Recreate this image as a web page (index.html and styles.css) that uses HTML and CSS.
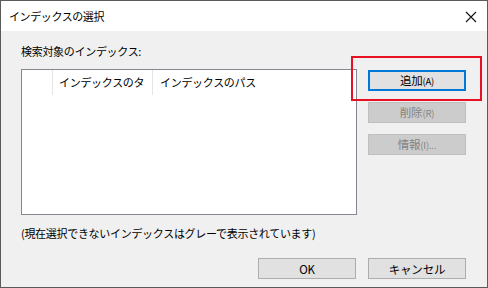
FILE: index.html
```html
<!DOCTYPE html>
<html lang="ja">
<head>
    <meta charset="UTF-8">
    <title>インデックスの選択</title>
    <link rel="stylesheet" href="styles.css">
</head>
<body>
    <div class="dialog">
        <div class="titlebar">
            <span class="title">インデックスの選択</span>
            <svg class="close" width="12" height="12" viewBox="0 0 12 12">
                <path d="M1 1 L11 11 M11 1 L1 11" stroke="#111" stroke-width="1.1" fill="none"/>
            </svg>
        </div>

        <div class="content">
            <div class="label">検索対象のインデックス:</div>

            <div class="main-row">
                <div class="listbox">
                    <div class="list-header">
                        <div class="col col-check"></div>
                        <div class="col col-name">インデックスのタ</div>
                        <div class="col col-path">インデックスのパス</div>
                    </div>
                </div>

                <div class="side-buttons">
                    <button class="btn btn-default">追加<span class="key">(A)</span></button>
                    <button class="btn" disabled>削除<span class="key">(R)</span></button>
                    <button class="btn" disabled>情報<span class="key">(I)...</span></button>
                    <div class="highlight"></div>
                </div>
            </div>

            <div class="note">(現在選択できないインデックスはグレーで表示されています)</div>

            <div class="footer">
                <button class="btn">OK</button>
                <button class="btn">キャンセル</button>
            </div>
        </div>
    </div>
</body>
</html>
```

FILE: styles.css
```css
body {
    margin: 0;
    padding: 0;
    font-family: "Noto Sans CJK JP", "Noto Sans", sans-serif;
    font-size: 11px;
    letter-spacing: -0.3px;
    color: #000;
    background: #fff;
}

.dialog {
    width: 488px;
    height: 288px;
    box-sizing: border-box;
    border: 1px solid #5a5a5a;
    display: flex;
    flex-direction: column;
}

.titlebar {
    height: 30px;
    background: #fff;
    display: flex;
    align-items: center;
    justify-content: space-between;
    padding: 0 10px 0 8px;
    flex-shrink: 0;
}

.title {
    letter-spacing: -0.4px;
}

.close {
    margin-top: 1px;
}

.content {
    flex: 1;
    background: #f0f0f0;
    padding: 12px 0 0 20px;
    display: flex;
    flex-direction: column;
}

.label {
    line-height: 16px;
}

.main-row {
    display: flex;
    margin-top: 10px;
}

.listbox {
    width: 336px;
    height: 146px;
    box-sizing: border-box;
    border: 1px solid #828790;
    background: #fff;
}

.list-header {
    display: flex;
    height: 25px;
}

.col {
    line-height: 25px;
    padding-left: 6px;
    box-sizing: border-box;
    border-right: 1px solid #e5e5e5;
    white-space: nowrap;
    overflow: hidden;
}

.col-check {
    width: 31px;
}

.col-name {
    width: 100px;
}

.col-path {
    border-right: none;
    padding-left: 7px;
}

.side-buttons {
    position: relative;
    display: flex;
    flex-direction: column;
    gap: 11px;
    margin-left: 11px;
    padding-top: 1px;
}

.btn {
    width: 98px;
    height: 21px;
    box-sizing: border-box;
    border: 1px solid #adadad;
    background: #e1e1e1;
    font-family: inherit;
    font-size: 11.5px;
    letter-spacing: -0.2px;
    color: #000;
    padding: 0;
    line-height: 18px;
}

.btn .key {
    font-size: 9.5px;
}

.btn:disabled {
    background: #cccccc;
    border-color: #bfbfbf;
    color: #838383;
}

.btn-default {
    border: 2px solid #0078d7;
    line-height: 16px;
}

.highlight {
    position: absolute;
    left: -17px;
    top: -13px;
    width: 131px;
    height: 45px;
    box-sizing: border-box;
    border: 2px solid #e81123;
}

.note {
    margin-top: 10px;
    line-height: 16px;
}

.footer {
    display: flex;
    justify-content: flex-end;
    gap: 12px;
    margin-top: 17px;
    padding-right: 21px;
}
```
